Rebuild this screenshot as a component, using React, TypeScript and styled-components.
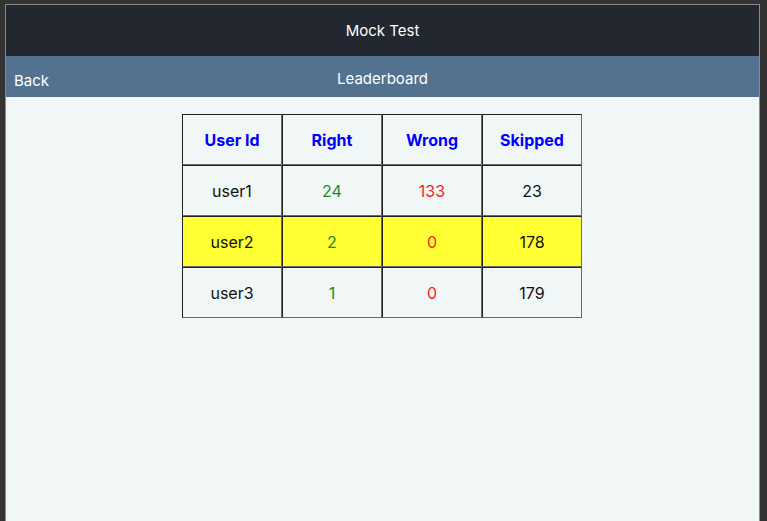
import React from "react";
import styled, { createGlobalStyle } from "styled-components";

const Global = createGlobalStyle`
  html, body { margin: 0; padding: 0; background: #333333; height: 100%; }
  body { font-family: Inter, "Noto Sans", sans-serif; overflow: hidden; }
  #root { height: 100%; }
`;

const Frame = styled.div`
  margin: 4px 0 0 5px;
  width: 753px;
  height: 517px;
  border: 1px solid #8a8a8a;
  border-bottom: none;
  background: #f1f6f6;
  display: flex;
  flex-direction: column;
`;

const TopBar = styled.div`
  height: 51px;
  background: #23272f;
  color: #ffffff;
  display: flex;
  align-items: center;
  justify-content: center;
  font-size: 15px;
`;

const SubBar = styled.div`
  height: 41px;
  background: #537290;
  color: #ffffff;
  display: grid;
  grid-template-columns: 1fr auto 1fr;
  align-items: center;
  font-size: 15px;
`;

const BackLink = styled.span`
  padding-left: 8px;
  font-size: 15px;
  padding-top: 7px;
`;

const Title = styled.span`
  padding-top: 3px;
`;

const Content = styled.div`
  display: flex;
  justify-content: center;
  padding-top: 17px;
  padding-right: 1px;
`;

const Table = styled.table`
  border-collapse: separate;
  border-spacing: 0;
`;

const Cell = styled.td<{ $bg?: string; $color?: string; $bold?: boolean }>`
  box-sizing: border-box;
  width: 100px;
  height: 51px;
  padding: 0;
  text-align: center;
  vertical-align: middle;
  border: 1px solid;
  border-color: #222222 #6a6a6a #6a6a6a #222222;
  background: ${(p) => p.$bg || "transparent"};
  color: ${(p) => p.$color || "#111111"};
  font-weight: ${(p) => (p.$bold ? 700 : 400)};
  font-size: 16px;
`;

const rows = [
  { id: "user1", right: 24, wrong: 133, skipped: 23, hl: false },
  { id: "user2", right: 2, wrong: 0, skipped: 178, hl: true },
  { id: "user3", right: 1, wrong: 0, skipped: 179, hl: false },
];

export default function App() {
  return (
    <>
      <Global />
      <Frame>
        <TopBar>Mock Test</TopBar>
        <SubBar>
          <BackLink>Back</BackLink>
          <Title>Leaderboard</Title>
          <span />
        </SubBar>
        <Content>
          <Table>
            <tbody>
              <tr>
                {["User Id", "Right", "Wrong", "Skipped"].map((h) => (
                  <Cell as="th" key={h} $color="#0000ff" $bold>
                    {h}
                  </Cell>
                ))}
              </tr>
              {rows.map((r) => {
                const bg = r.hl ? "#ffff33" : undefined;
                return (
                  <tr key={r.id}>
                    <Cell $bg={bg}>{r.id}</Cell>
                    <Cell $bg={bg} $color="#1f8a2a">{r.right}</Cell>
                    <Cell $bg={bg} $color="#ff1a1a">{r.wrong}</Cell>
                    <Cell $bg={bg}>{r.skipped}</Cell>
                  </tr>
                );
              })}
            </tbody>
          </Table>
        </Content>
      </Frame>
    </>
  );
}
